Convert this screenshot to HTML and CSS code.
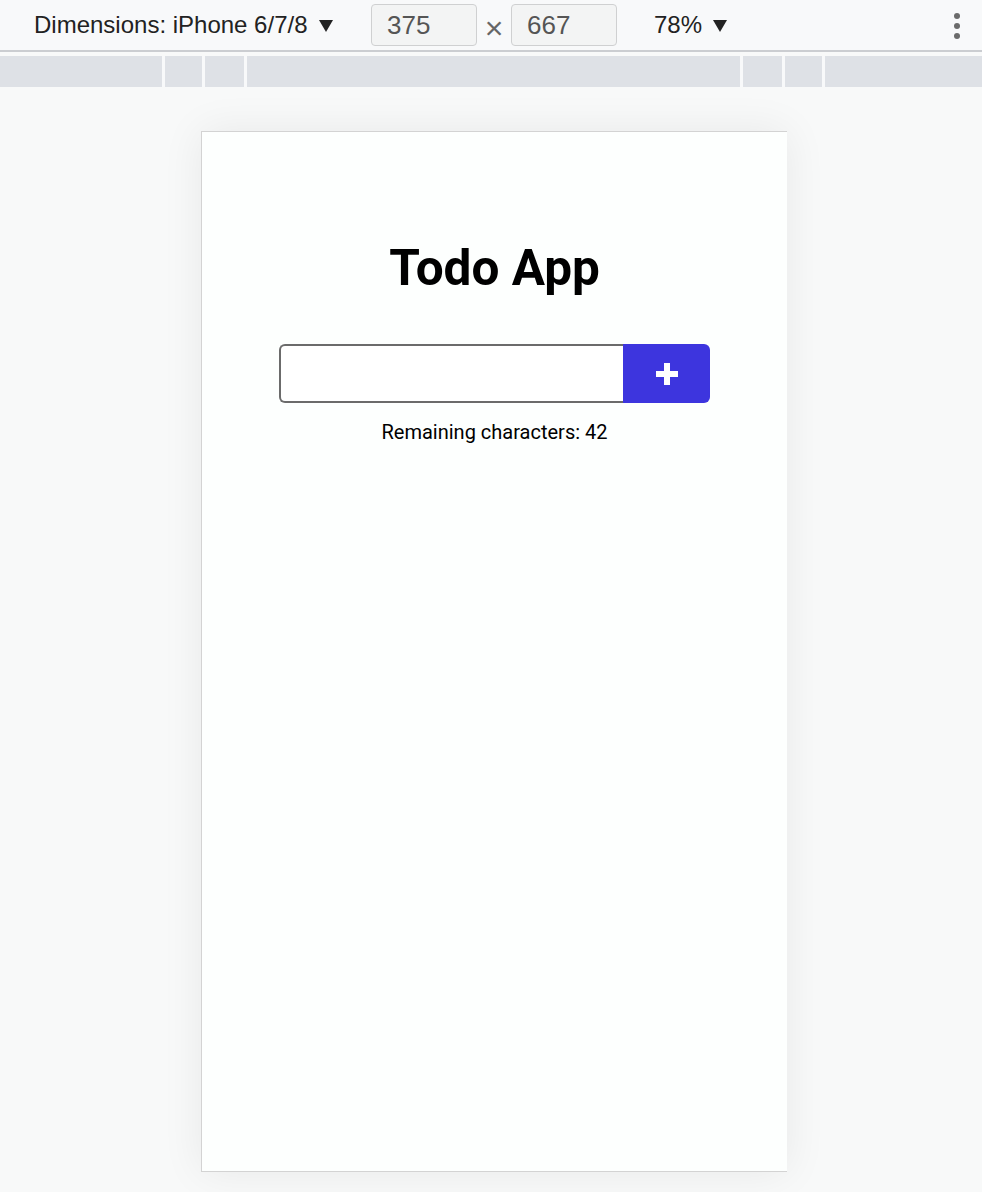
FILE: index.html
```html
<!DOCTYPE html>
<html lang="en">
<head>
<meta charset="utf-8">
<title>Todo App - Device toolbar</title>
<link rel="stylesheet" href="styles.css">
</head>
<body>
<div class="toolbar">
  <div class="device-select">
    <span class="label">Dimensions: iPhone 6/7/8</span>
    <svg class="caret" width="14" height="12" viewBox="0 0 14 12"><path d="M0 0h14L7 12z" fill="#222"/></svg>
  </div>
  <div class="dim-box">375</div>
  <span class="times">×</span>
  <div class="dim-box">667</div>
  <div class="zoom-select">
    <span class="label">78%</span>
    <svg class="caret" width="14" height="12" viewBox="0 0 14 12"><path d="M0 0h14L7 12z" fill="#222"/></svg>
  </div>
  <div class="more">
    <span class="dot"></span><span class="dot"></span><span class="dot"></span>
  </div>
</div>
<div class="ruler">
  <div class="seg s1"></div>
  <div class="seg s2"></div>
  <div class="seg s3"></div>
  <div class="seg s4"></div>
  <div class="seg s5"></div>
  <div class="seg s6"></div>
  <div class="seg s7"></div>
</div>
<div class="stage">
  <div class="device">
    <h1 class="title">Todo App</h1>
    <form class="todo-form">
      <input class="todo-input" type="text" aria-label="New todo">
      <button class="add-btn" type="button" aria-label="Add">
        <svg width="22" height="22" viewBox="0 0 22 22"><path d="M11 0v22M0 11h22" stroke="#fff" stroke-width="6"/></svg>
      </button>
    </form>
    <p class="remaining">Remaining characters: 42</p>
  </div>
</div>
</body>
</html>
```
FILE: styles.css
```css
html, body {
  margin: 0;
  padding: 0;
}
body {
  background: #f8f9f9;
  font-family: "Liberation Sans", Arial, sans-serif;
  width: 982px;
  height: 1192px;
  overflow: hidden;
}
.toolbar {
  height: 50px;
  border-bottom: 2px solid #cbcdd1;
  display: flex;
  align-items: center;
  background: #f8f9fa;
  box-sizing: content-box;
}
.device-select {
  display: flex;
  align-items: center;
  margin-left: 34px;
  width: 337px;
}
.label {
  font-size: 24px;
  color: #222;
}
.caret {
  margin-left: 11px;
  margin-top: 1px;
}
.dim-box {
  width: 104px;
  height: 40px;
  border: 1px solid #cfd0d1;
  border-radius: 4px;
  background: #f3f4f4;
  box-sizing: content-box;
  font-size: 26px;
  color: #555;
  line-height: 40px;
  text-indent: 15px;
}
.times {
  width: 34px;
  text-align: center;
  font-size: 32px;
  line-height: 40px;
  color: #666;
  margin-top: 6px;
}
.zoom-select {
  display: flex;
  align-items: center;
  margin-left: 37px;
}
.more {
  margin-left: auto;
  margin-right: 22px;
  display: flex;
  flex-direction: column;
  gap: 4px;
  margin-top: 1px;
}
.dot {
  width: 6px;
  height: 6px;
  border-radius: 50%;
  background: #6b6b6b;
}
.ruler {
  margin-top: 4px;
  height: 31px;
  display: flex;
}
.seg {
  background: #dee1e6;
  height: 100%;
  border-right: 3px solid #f8f9fa;
  box-sizing: border-box;
}
.s1 { width: 165px; }
.s2 { width: 40px; }
.s3 { width: 42px; }
.s4 { width: 496px; }
.s5 { width: 42px; }
.s6 { width: 40px; }
.s7 { flex: 1; border-right: 0; }
.stage {
  padding-top: 44px;
  padding-left: 201px;
}
.device {
  width: 586px;
  height: 1041px;
  box-sizing: border-box;
  background: #fdfffe;
  border-left: 1px solid #d3d3d3;
  border-top: 1px solid #d3d3d3;
  border-bottom: 1px solid #d3d3d3;
  box-shadow: 0 0 40px rgba(0, 0, 0, 0.07);
  display: flex;
  flex-direction: column;
  align-items: center;
  font-family: Roboto, "Liberation Sans", sans-serif;
  padding-top: 106px;
}
.title {
  margin: 0;
  font-size: 49.5px;
  line-height: 60px;
  font-weight: 700;
  color: #000;
}
.todo-form {
  margin-top: 46px;
  display: flex;
  width: 431px;
  height: 59px;
}
.todo-input {
  flex: 1;
  margin: 0;
  height: 59px;
  box-sizing: border-box;
  border: 2px solid #6b6b6b;
  border-right: 0;
  border-radius: 6px 0 0 6px;
  background: #fff;
  outline: none;
  padding: 0 12px;
  font-size: 20px;
}
.add-btn {
  width: 87px;
  height: 59px;
  margin: 0;
  border: 0;
  border-radius: 0 6px 6px 0;
  background: #3d35de;
  display: flex;
  align-items: center;
  justify-content: center;
  padding: 0;
}
.remaining {
  margin: 15px 0 0;
  font-size: 20px;
  line-height: 28px;
  color: #000;
}
```
